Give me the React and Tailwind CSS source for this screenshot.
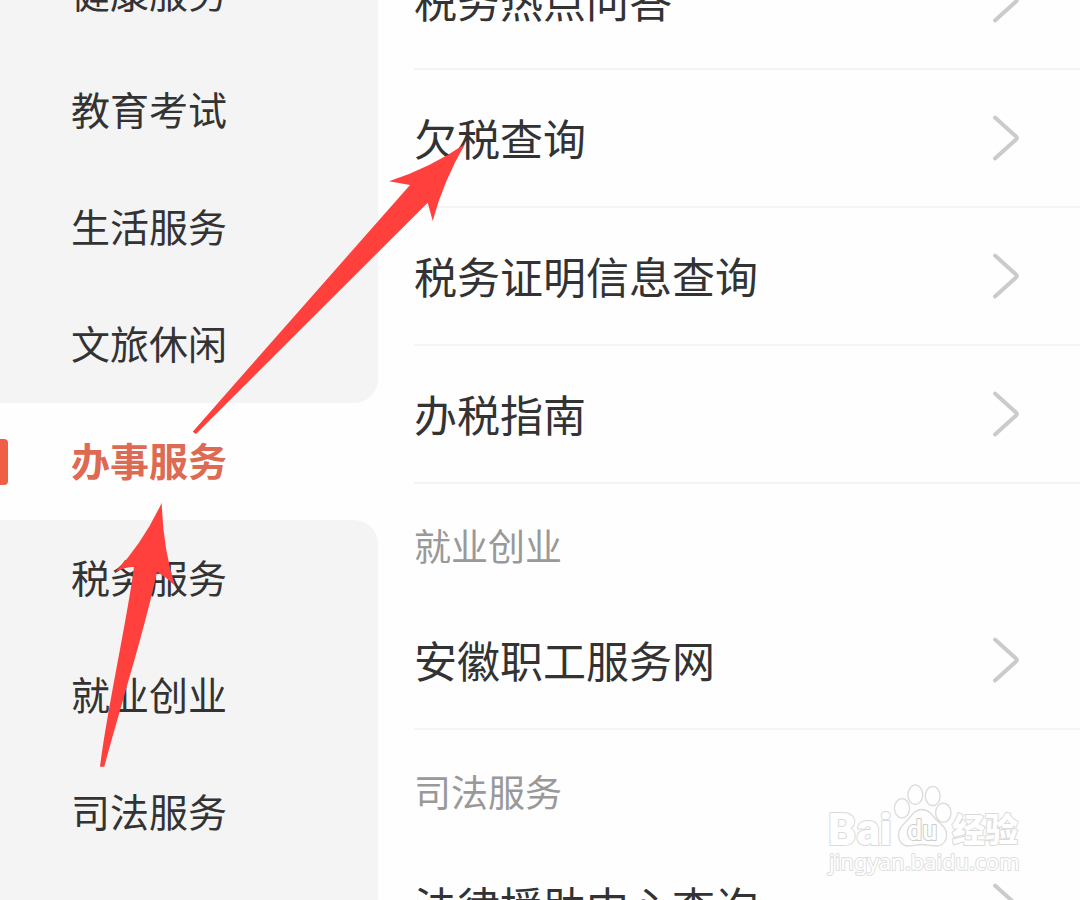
import React from "react";

const categories = [
  "健康服务",
  "教育考试",
  "生活服务",
  "文旅休闲",
  "办事服务",
  "税务服务",
  "就业创业",
  "司法服务",
];
const activeIndex = 4;

const sections = [
  { title: null, items: ["税务热点问答", "欠税查询", "税务证明信息查询", "办税指南"] },
  { title: "就业创业", items: ["安徽职工服务网"] },
  { title: "司法服务", items: ["法律援助中心查询"] },
];

function Chevron() {
  return (
    <svg className="h-12 w-7 shrink-0" viewBox="0 0 28 48" fill="none" aria-hidden="true">
      <path
        d="M3 3.500 L24 22.400 Q25.600 24 24 25.600 L3 44.500"
        stroke="#cbcbcb"
        strokeWidth="4"
        strokeLinecap="round"
        strokeLinejoin="round"
      />
    </svg>
  );
}

function Category({ label, index }) {
  if (index === activeIndex) {
    return (
      <button
        type="button"
        aria-current="true"
        className="flex h-[117px] w-full items-center bg-[#fefefe] text-[39px] font-bold text-[#dd6a53]"
      >
        <span className="h-[46px] w-2 rounded-r-[4px] bg-[#ee5f45]" />
        <span className="pb-1 pl-[63px]">{label}</span>
      </button>
    );
  }
  const corner =
    index === activeIndex - 1
      ? "rounded-br-3xl"
      : index === activeIndex + 1
        ? "rounded-tr-3xl"
        : "";
  return (
    <button
      type="button"
      className={`flex h-[117px] w-full items-center bg-[#f4f4f4] pb-1 pl-[71px] text-[39px] text-[#333333] ${corner}`}
    >
      {label}
    </button>
  );
}

function Section({ title, items }) {
  return (
    <section>
      {title && (
        <h2 className="flex h-[108px] items-center pt-4 text-[37px] text-[#999999]">{title}</h2>
      )}
      <ul>
        {items.map((item) => (
          <li key={item} className="border-b-2 border-[#f4f4f4]">
            <a
              href="#"
              className="flex h-[136px] items-center justify-between pr-[60px] text-[43px] text-[#333333]"
            >
              <span className="pb-0.5">{item}</span>
              <Chevron />
            </a>
          </li>
        ))}
      </ul>
    </section>
  );
}

function PointerArrows() {
  return (
    <svg
      className="pointer-events-none absolute left-0 top-0 h-[900px] w-[540px]"
      viewBox="0 0 540 900"
      fill="#ff403c"
      aria-hidden="true"
    >
      <path d="M465 144 Q430 168 389 181.300 L410 185 L192.700 431.700 L196 434 L427.700 202.700 L432.700 221 Q443 182 465 144 Z" />
      <path d="M161.700 502.700 Q143 543 115 572.300 Q124 567 134 566.700 C127 620 108 705 100 766.700 L104.300 766.700 C118 715 146 625 157 571.700 Q166 577 175 585.700 Q163 548 161.700 502.700 Z" />
    </svg>
  );
}

function Watermark() {
  return (
    <div className="pointer-events-none absolute left-[820px] top-[780px]">
      <svg
        className="h-[100px] w-[210px]"
        viewBox="0 0 210 100"
        fill="#ffffff"
        stroke="#dadada"
        strokeWidth="1.300"
        role="img"
        aria-label="Baidu 经验 jingyan.baidu.com"
      >
        <g fill="#fefefe">
          <ellipse cx="82" cy="28.300" rx="7.600" ry="9.600" />
          <ellipse cx="95.300" cy="14.700" rx="7.400" ry="9.800" />
          <ellipse cx="112.700" cy="16" rx="7.400" ry="9.600" />
          <ellipse cx="123.300" cy="32.700" rx="7.700" ry="9.600" />
          <path d="M102 29.500 C109 29.500 111.500 34.500 116 39.500 C121 44.500 126.500 47.500 126.500 54.500 C126.500 62 122 66 115.500 66 C110 66 107 64.500 102 64.500 C97 64.500 94 66 88 66 C82 66 78.500 61 78.500 55 C78.500 48 83 45 87.500 40 C92 35 95 29.500 102 29.500 Z" />
        </g>
        <g strokeWidth="2" strokeLinejoin="round" paintOrder="stroke">
          <text x="8" y="65" fontFamily="Roboto, sans-serif" fontWeight="900" fontSize="44">Bai</text>
          <text x="87" y="60" stroke="#cccccc" fontFamily="Roboto, sans-serif" fontWeight="500" fontSize="27">du</text>
          <text x="132" y="62" fontFamily="'Noto Sans CJK SC', sans-serif" fontWeight="900" fontSize="33">经验</text>
          <text x="9" y="90" stroke="#dedede" fontFamily="'Noto Sans', sans-serif" fontWeight="400" fontSize="22">jingyan.baidu.com</text>
        </g>
      </svg>
    </div>
  );
}

export default function App() {
  return (
    <div className="relative h-screen overflow-hidden bg-[#fefefe] font-['Noto_Sans_CJK_SC',sans-serif]">
      <div className="flex">
        <nav className="-mt-[65px] w-[378px] shrink-0" aria-label="服务分类">
          {categories.map((label, index) => (
            <Category key={label} label={label} index={index} />
          ))}
          <div className="h-[117px] bg-[#f4f4f4]" />
        </nav>
        <main className="-mt-[68px] min-w-0 flex-1 pl-9">
          {sections.map((section, index) => (
            <Section key={index} {...section} />
          ))}
        </main>
      </div>
      <PointerArrows />
      <Watermark />
    </div>
  );
}
